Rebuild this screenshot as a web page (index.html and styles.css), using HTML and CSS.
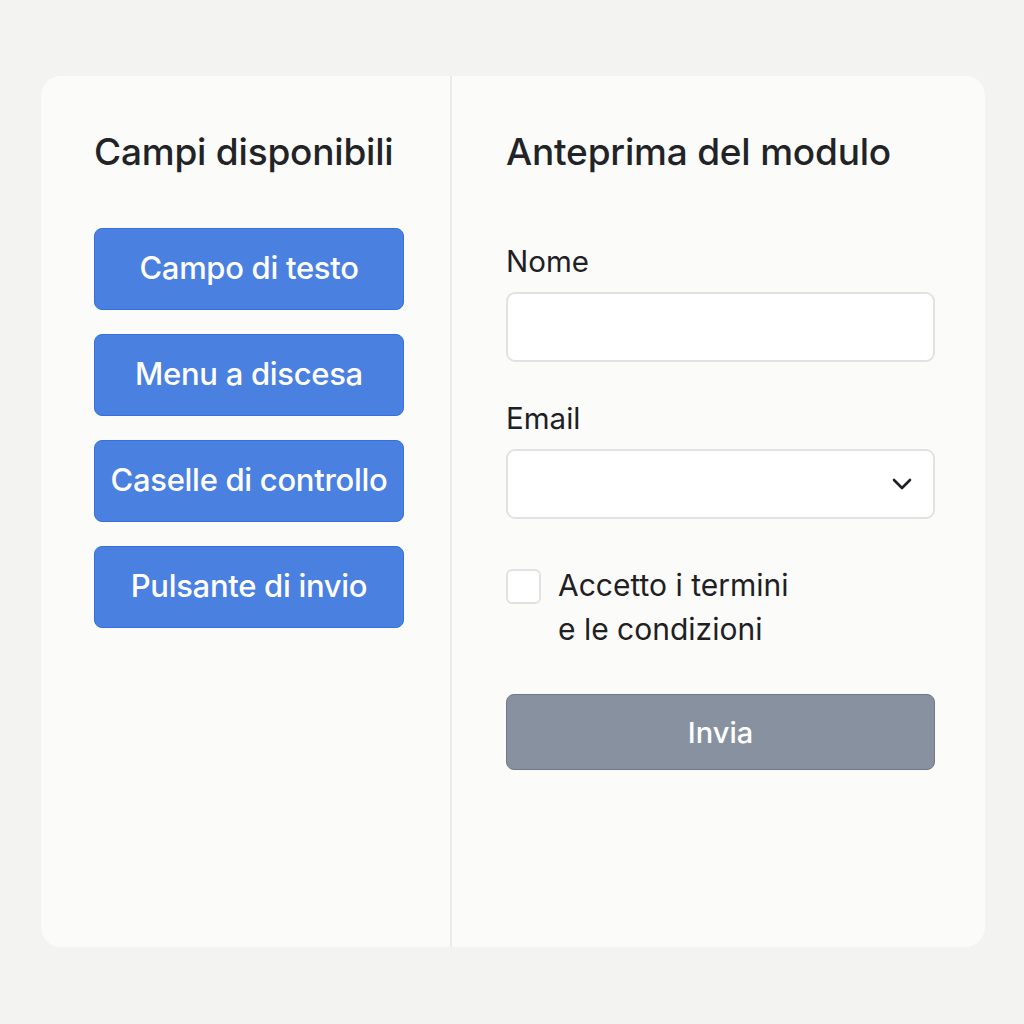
FILE: index.html
```html
<!DOCTYPE html>
<html lang="it">
<head>
<meta charset="utf-8">
<title>Generatore di moduli</title>
<link rel="stylesheet" href="styles.css">
</head>
<body>
<main class="page">
  <section class="card">
    <div class="palette">
      <h2 class="title">Campi disponibili</h2>
      <div class="field-list">
        <button class="field-btn">Campo di testo</button>
        <button class="field-btn">Menu a discesa</button>
        <button class="field-btn">Caselle di controllo</button>
        <button class="field-btn">Pulsante di invio</button>
      </div>
    </div>
    <div class="preview">
      <h2 class="title">Anteprima del modulo</h2>
      <label class="label">Nome</label>
      <div class="input"></div>
      <label class="label label-email">Email</label>
      <div class="input select">
        <svg class="chevron" width="20" height="12" viewBox="0 0 20 12"><path d="M2 2 L10 10 L18 2" fill="none" stroke="#1f2125" stroke-width="2.6" stroke-linecap="round" stroke-linejoin="round"/></svg>
      </div>
      <div class="check-row">
        <span class="checkbox"></span>
        <span class="check-text">Accetto i termini<br>e le condizioni</span>
      </div>
      <button class="submit">Invia</button>
    </div>
  </section>
</main>
</body>
</html>
```
FILE: styles.css
```css
html, body {
  margin: 0;
  padding: 0;
  background: #f3f3f1;
}
body {
  font-family: Inter, "Liberation Sans", sans-serif;
  color: #222327;
}
.page {
  padding: 76px 39px 77px 41px;
}
.card {
  display: grid;
  grid-template-columns: 411px 1fr;
  height: 871px;
  background: #fbfbf9;
  border-radius: 20px;
}
.palette {
  padding: 0 0 0 53px;
  border-right: 2px solid #ebebe9;
}
.preview {
  padding: 0 50px 0 54px;
  display: flex;
  flex-direction: column;
}
.title {
  margin: 0;
  padding-top: 54px;
  font-size: 37px;
  line-height: 44px;
  font-weight: 500;
  color: #222327;
  letter-spacing: -0.2px;
}
.field-list {
  display: flex;
  flex-direction: column;
  gap: 24px;
  margin-top: 54px;
  width: 310px;
}
.field-btn {
  height: 82px;
  padding: 0 0 3px;
  background: #4a80e0;
  border: 1.5px solid #3370e2;
  border-radius: 8px;
  color: #ffffff;
  font-family: Inter, "Liberation Sans", sans-serif;
  font-size: 31px;
  font-weight: 500;
  letter-spacing: -0.3px;
}
.label {
  font-size: 29.5px;
  line-height: 36px;
  margin-top: 69px;
  color: #1f2024;
}
.label-email {
  margin-top: 38px;
}
.input {
  margin-top: 13px;
  height: 66px;
  background: #ffffff;
  border: 2px solid #e2e2e0;
  border-radius: 9px;
  display: flex;
  align-items: center;
  justify-content: flex-end;
}
.chevron {
  margin-right: 21px;
}
.check-row {
  display: flex;
  align-items: flex-start;
  margin-top: 50px;
  gap: 17px;
}
.checkbox {
  width: 31px;
  height: 31px;
  border: 2px solid #e2e2e0;
  border-radius: 6px;
  background: #ffffff;
  flex: none;
}
.check-text {
  font-size: 30px;
  line-height: 44px;
  color: #1f2024;
  margin-top: -6px;
}
.submit {
  margin-top: 43px;
  height: 76px;
  background: #8891a0;
  border: 1.5px solid #6f7888;
  border-radius: 8px;
  color: #ffffff;
  font-family: Inter, "Liberation Sans", sans-serif;
  font-size: 29px;
  font-weight: 500;
}
```
